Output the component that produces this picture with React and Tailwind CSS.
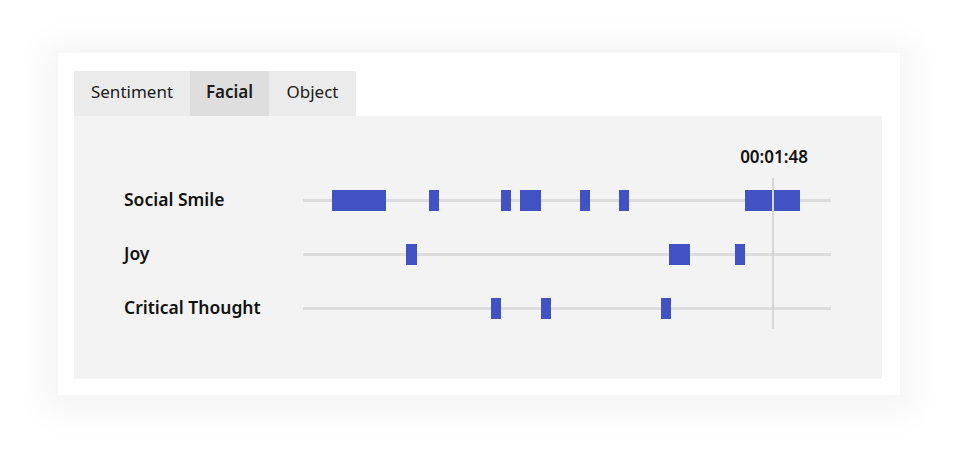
import React from "react";

const rows = [
  { label: "Social Smile", bars: [[332, 386], [429, 439], [501, 511], [520, 541], [580, 590], [619, 629], [745, 800]] },
  { label: "Joy", bars: [[406, 417], [669, 690], [735, 745]] },
  { label: "Critical Thought", bars: [[491, 501], [541, 551], [661, 671]] },
];

const TRACK_X = 303;

export default function App() {
  return (
    <div
      className="w-[960px] h-[459px] bg-white pt-[53px] pl-[58px]"
      style={{ fontFamily: '"Noto Sans", "Open Sans", sans-serif' }}
    >
      <div className="w-[842px] h-[342px] bg-white pt-[18px] pl-[16px] shadow-[0_4px_30px_16px_rgba(0,0,0,0.04)]">
        <div className="flex h-[45px] text-[17px] text-[#1b1b1b]">
          <div className="w-[116px] bg-[#ebebeb] flex items-center justify-center pb-[3px]">Sentiment</div>
          <div className="w-[79px] bg-[#dedede] flex items-center justify-center pb-[3px] font-semibold">Facial</div>
          <div className="w-[87px] bg-[#ebebeb] flex items-center justify-center pb-[3px]">Object</div>
        </div>
        <div className="w-[808px] h-[263px] bg-[#f3f3f3] pt-[57px] pl-[50px]">
          <div className="relative">
            {rows.map((r) => (
              <div key={r.label} className="flex h-[54px] items-center">
                <div className="w-[179px] text-[17.5px] font-semibold text-[#111] pb-[1px]">{r.label}</div>
                <div className="relative w-[528px] h-[21px]">
                  <div className="absolute left-0 right-0 top-[9px] h-[3px] bg-[#dcdcdc]" />
                  {r.bars.map(([a, b]) => (
                    <div
                      key={a}
                      className="absolute top-0 h-[21px] bg-[#4052c4]"
                      style={{ left: a - TRACK_X, width: b - a }}
                    />
                  ))}
                </div>
              </div>
            ))}
            <div className="absolute left-[648px] top-[5px] w-[2px] h-[151px] bg-[#d6d6d6]" />
            <div className="absolute left-[650px] top-[-27px] -translate-x-1/2 text-[17px] font-semibold text-[#111] leading-[22px]">
              00:01:48
            </div>
          </div>
        </div>
      </div>
    </div>
  );
}
